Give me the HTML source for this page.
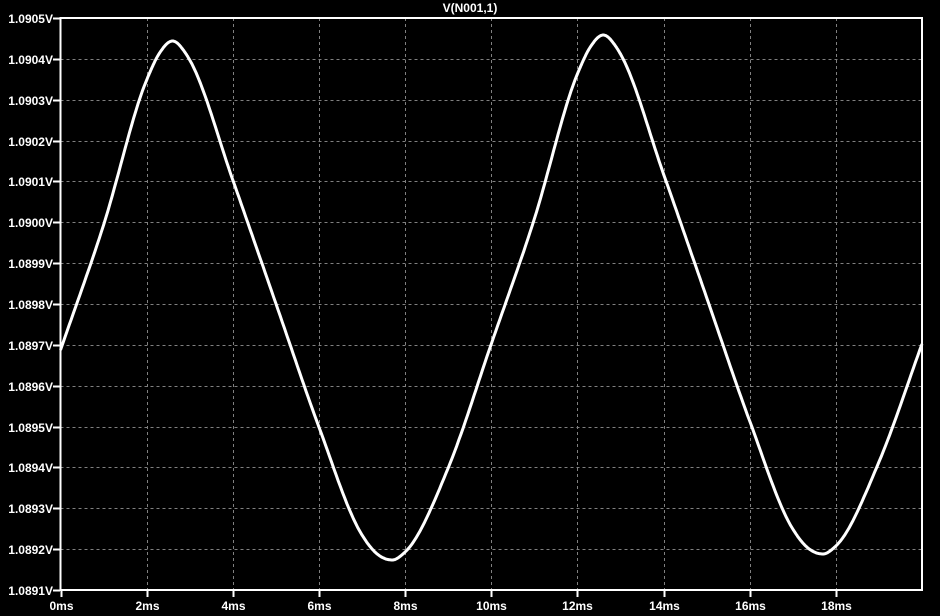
<!DOCTYPE html>
<html><head><meta charset="utf-8"><style>
html,body{margin:0;padding:0;background:#000;width:940px;height:616px;overflow:hidden}
svg{display:block}
text{font-family:"Liberation Sans",sans-serif;font-weight:bold;font-size:12px;fill:#fff}
</style></head><body>
<svg id="s" width="940" height="616" viewBox="0 0 940 616" xmlns="http://www.w3.org/2000/svg">
<rect width="940" height="616" fill="#000"/>
<g id="grid" stroke="#808080" stroke-width="1" stroke-dasharray="3,3"></g>
<g id="labels"></g>
<polyline id="curve" fill="none" stroke="#fff" stroke-width="3" stroke-linejoin="round"/>
<rect x="60.5" y="18" width="861.5" height="572" fill="none" stroke="#fff" stroke-width="2"/>
<text x="470" y="12" text-anchor="middle">V(N001,1)</text>
</svg>
<script>
var ns="http://www.w3.org/2000/svg";
var g=document.getElementById('grid'),L=document.getElementById('labels');
function el(t,a,p,txt){var e=document.createElementNS(ns,t);for(var k in a)e.setAttribute(k,a[k]);if(txt)e.textContent=txt;p.appendChild(e);return e;}
var x0=60.5,x1=922,y0=18,y1=590;
for(var i=0;i<=14;i++){
 var y=y0+(y1-y0)*i/14, yy=Math.round(y)+0.5;
 if(i>0&&i<14) el('line',{x1:x0,y1:yy,x2:x1,y2:yy},g);
 el('line',{x1:53,y1:yy,x2:60,y2:yy,stroke:'#fff','stroke-width':2},L);
 var v=(1.0905-i*0.0001).toFixed(4)+'V';
 el('text',{x:53,y:Math.round(y)+5,'text-anchor':'end'},L,v);
}
for(var j=0;j<=10;j++){
 var x=x0+(x1-x0)*j/10, xx=Math.round(x)+0.5;
 if(j>0&&j<10) el('line',{x1:xx,y1:y0,x2:xx,y2:y1},g);
 if(j<10) el('line',{x1:xx,y1:590,x2:xx,y2:597,stroke:'#fff','stroke-width':2},L);
 if(j<10) el('text',{x:xx,y:610,'text-anchor':'middle'},L,(2*j)+'ms');
}
var base=[[0,350],[1,225],[2,80],[2.3,53],[2.6,41],[2.9,53],[3,60],[4,180],[5,303.5],[6,427],[7,535],[7.3,552],[7.7,560],[8,552],[9,468]];
var P=[];
base.forEach(function(p){P.push(p);});
base.forEach(function(p){P.push([p[0]+10,p[1]-6]);});
P.push([20,344]);
var n=P.length,m=[];
for(var i2=0;i2<n;i2++){
 var s;
 if(i2==0) s=(P[1][1]-P[0][1])/(P[1][0]-P[0][0]);
 else if(i2==n-1) s=(P[n-1][1]-P[n-2][1])/(P[n-1][0]-P[n-2][0]);
 else{
  var h1=P[i2][0]-P[i2-1][0],h2=P[i2+1][0]-P[i2][0];
  var s1=(P[i2][1]-P[i2-1][1])/h1,s2=(P[i2+1][1]-P[i2][1])/h2;
  s=(s1*h2+s2*h1)/(h1+h2);
  if(s1*s2<=0) s=0;
 }
 m.push(s);
}
var pts=[];
for(var q=0;q<n-1;q++){
 var p1=P[q],p2=P[q+1],h=p2[0]-p1[0];
 for(var k=0;k<20;k++){
  var u=k/20,u2=u*u,u3=u2*u;
  var y=(2*u3-3*u2+1)*p1[1]+(u3-2*u2+u)*h*m[q]+(-2*u3+3*u2)*p2[1]+(u3-u2)*h*m[q+1];
  var t=p1[0]+u*h;
  pts.push((x0+(x1-x0)*t/20).toFixed(1)+','+y.toFixed(1));
 }
}
pts.push(x1+','+344);
document.getElementById('curve').setAttribute('points',pts.join(' '));
</script>
</body></html>
